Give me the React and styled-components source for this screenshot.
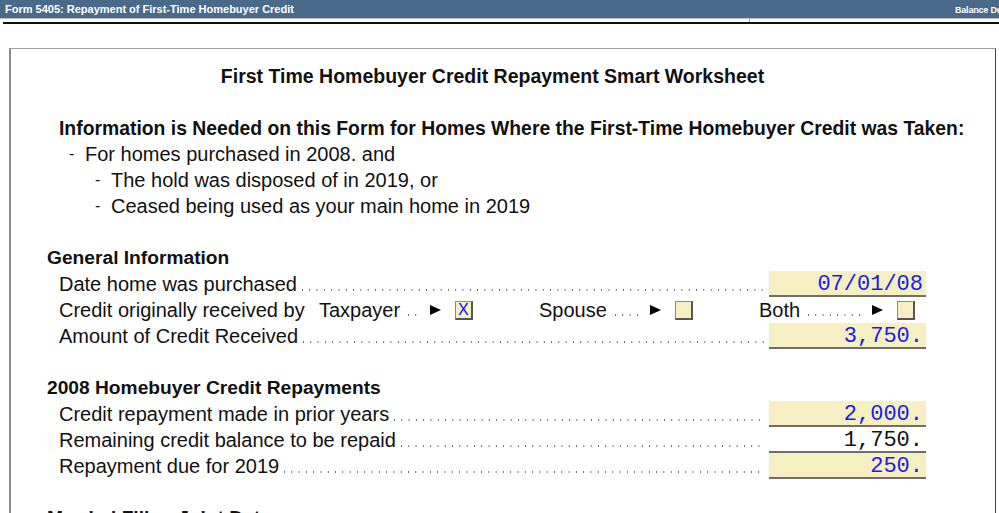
import styled, { createGlobalStyle } from 'styled-components'

const GlobalStyle = createGlobalStyle`
  html, body {
    margin: 0;
    padding: 0;
    background: #fff;
    overflow: hidden;
  }
  body {
    font-family: "Liberation Sans", Arial, sans-serif;
    color: #111;
  }
`

const TopBar = styled.div`
  display: flex;
  align-items: center;
  height: 18px;
  background: #4a6a8b;
  color: #fff;
  font-weight: bold;
  white-space: nowrap;
`

const FormName = styled.div`
  flex: 1;
  padding-left: 5px;
  font-size: 11px;
`

const BalanceTag = styled.div`
  width: 44px;
  overflow: hidden;
  font-size: 9px;
  letter-spacing: -0.2px;
  padding-top: 2px;
`

const SubBar = styled.div`
  display: flex;
  height: 3px;
  border-top: 1px solid #b9bec4;
`

const SubCell = styled.div`
  width: ${p => p.$w}px;
  border-right: 1px solid #9aa0a6;
`

const BlackRule = styled.div`
  height: 2px;
  margin-left: 3px;
  background: #111;
`

const Panel = styled.div`
  margin: 24px 0 0 9px;
  width: 987px;
  min-height: 600px;
  border-left: 2px solid #8c8c8c;
  border-top: 1px solid #a0a0a0;
  border-right: 1px solid #444;
  padding: 14px 69px 0 36px;
  box-sizing: border-box;
`

const Title = styled.h1`
  margin: 0 0 26px;
  text-align: center;
  font-size: 19.5px;
  line-height: 26px;
  font-weight: bold;
  padding-left: 12px;
`

const InfoHeading = styled.h2`
  margin: 0 -45px 0 12px;
  font-size: 19.35px;
  line-height: 26px;
  font-weight: bold;
  white-space: nowrap;
`

const Bullet = styled.div`
  display: flex;
  gap: 8px;
  font-size: 20px;
  line-height: 26px;
  padding-left: ${p => (p.$level === 2 ? 48 : 22)}px;
  &::before {
    content: '-';
    width: 8px;
    font-size: 16px;
  }
`

const Section = styled.section`
  margin-top: 26px;
`

const SectionHeading = styled.h3`
  margin: 0;
  font-size: 19.2px;
  line-height: 26px;
  font-weight: bold;
  white-space: nowrap;
`

const Row = styled.div`
  display: flex;
  align-items: flex-end;
  height: 26px;
  padding-left: 12px;
  font-size: 20px;
  line-height: 26px;
  white-space: nowrap;
`

const Label = styled.span`
  flex: ${p => (p.$fixed ? '0 0 260px' : '0 0 auto')};
`

const Leader = styled.span`
  flex: 1 1 0;
  min-width: 0;
  height: 2px;
  align-self: flex-end;
  margin: 0 5px 6px 5px;
  background-image: linear-gradient(to right, #666 1.2px, transparent 1.2px);
  background-size: 7.3px 2px;
  background-repeat: repeat-x;
`

const Field = styled.div`
  flex: 0 0 157px;
  height: 26px;
  box-sizing: border-box;
  background: ${p => (p.$plain ? 'transparent' : '#f5efc2')};
  border-bottom: 2px solid #6e6e6e;
  text-align: right;
  padding: 3px 3px 0 0;
  font-family: "Liberation Mono", "Courier New", monospace;
  font-size: 22px;
  line-height: 22px;
  color: ${p => (p.$plain ? '#111' : '#1a1aee')};
`

const Choice = styled.div`
  flex: 0 0 220px;
  display: flex;
  align-items: center;
  height: 26px;
  padding-right: 66px;
  box-sizing: border-box;
  &:last-child {
    flex-basis: 156px;
    padding-right: 0;
  }
`

const Arrow = styled.svg`
  flex: 0 0 11px;
  margin-right: 14px;
`

const Box = styled.span`
  flex: 0 0 18px;
  height: 19px;
  box-sizing: border-box;
  background: #f5efc2;
  border: 1px solid #8a8a8a;
  border-right-color: #555;
  border-bottom-color: #555;
  border-right-width: 2px;
  border-bottom-width: 2px;
  font-family: "Liberation Mono", "Courier New", monospace;
  font-size: 18px;
  line-height: 17px;
  text-align: center;
  color: #1a1aee;
`

const ChoiceLeader = styled(Leader)`
  margin: 0 9px 7px 8px;
`

function Option({ label, checked }) {
  return (
    <Choice>
      <span>{label}</span>
      <ChoiceLeader />
      <Arrow width="11" height="10" viewBox="0 0 11 10">
        <polygon points="0,0 11,5 0,10" fill="#000" />
      </Arrow>
      <Box>{checked ? 'X' : ''}</Box>
    </Choice>
  )
}

function LineItem({ label, value, plain }) {
  return (
    <Row>
      <Label>{label}</Label>
      <Leader />
      <Field $plain={plain}>{value}</Field>
    </Row>
  )
}

export default function App() {
  return (
    <>
      <GlobalStyle />
      <TopBar>
        <FormName>Form 5405: Repayment of First-Time Homebuyer Credit</FormName>
        <BalanceTag>Balance Due</BalanceTag>
      </TopBar>
      <SubBar>
        <SubCell $w={749} />
      </SubBar>
      <BlackRule />
      <Panel>
        <Title>First Time Homebuyer Credit Repayment Smart Worksheet</Title>
        <InfoHeading>
          Information is Needed on this Form for Homes Where the First-Time Homebuyer Credit was Taken:
        </InfoHeading>
        <Bullet>For homes purchased in 2008. and</Bullet>
        <Bullet $level={2}>The hold was disposed of in 2019, or</Bullet>
        <Bullet $level={2}>Ceased being used as your main home in 2019</Bullet>

        <Section>
          <SectionHeading>General Information</SectionHeading>
          <LineItem label="Date home was purchased" value="07/01/08" />
          <Row>
            <Label $fixed>Credit originally received by</Label>
            <Option label="Taxpayer" checked />
            <Option label="Spouse" />
            <Option label="Both" />
          </Row>
          <LineItem label="Amount of Credit Received" value="3,750." />
        </Section>

        <Section>
          <SectionHeading>2008 Homebuyer Credit Repayments</SectionHeading>
          <LineItem label="Credit repayment made in prior years" value="2,000." />
          <LineItem label="Remaining credit balance to be repaid" value="1,750." plain />
          <LineItem label="Repayment due for 2019" value="250." />
        </Section>

        <Section>
          <SectionHeading>Married Filing Joint Data</SectionHeading>
        </Section>
      </Panel>
    </>
  )
}
